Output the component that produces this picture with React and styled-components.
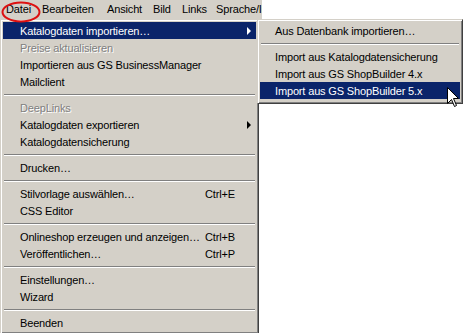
import React from 'react';
import styled, { createGlobalStyle } from 'styled-components';

const GlobalStyle = createGlobalStyle`
  html, body {
    margin: 0;
    padding: 0;
    background: #ffffff;
  }
  body {
    font-family: "Liberation Sans", Arial, sans-serif;
    font-size: 11px;
    letter-spacing: -0.15px;
  }
`;

const Screen = styled.div`
  position: relative;
  width: 464px;
  height: 333px;
  overflow: hidden;
  background: #ffffff;
`;

const MenuBar = styled.div`
  display: flex;
  align-items: center;
  width: 262px;
  height: 19px;
  background: #d4d0c8;
  box-sizing: border-box;
  overflow: hidden;
  white-space: nowrap;
`;

const BarItem = styled.span`
  flex: none;
  width: ${p => (p.$w ? `${p.$w}px` : 'auto')};
  padding-left: 6px;
  box-sizing: border-box;
  color: #000;
  line-height: 19px;
`;

// Windows 2000 style raised popup frame
const Popup = styled.div`
  background: #d4d0c8;
  border-top: 1px solid #d4d0c8;
  border-left: 1px solid #d4d0c8;
  border-right: 1px solid #404040;
  border-bottom: 1px solid #404040;
  box-shadow: inset 1px 1px 0 #ffffff, inset -1px -1px 0 #808080;
  padding: 2px;
  box-sizing: border-box;
  display: flex;
  flex-direction: column;
`;

const MainMenu = styled(Popup)`
  width: 259px;
  min-height: 314px;
`;

const SubMenu = styled(Popup)`
  position: absolute;
  top: -3px;
  left: 254px;
  width: 206px;
  padding-bottom: 4px;
  z-index: 2;
`;

const Item = styled.div`
  position: relative;
  display: flex;
  align-items: center;
  height: 17px;
  padding-left: ${p => p.$indent || 17}px;
  background: ${p => (p.$active ? '#0a246a' : 'transparent')};
  color: ${p => (p.$active ? '#ffffff' : p.$disabled ? '#808080' : '#000000')};
  text-shadow: ${p => (p.$disabled ? '1px 1px 0 #ffffff' : 'none')};
  white-space: nowrap;
`;

const Label = styled.span`
  flex: 1;
`;

const Right = styled.span`
  display: flex;
  align-items: center;
  width: 51px;
`;

const Arrow = styled.span`
  margin-left: auto;
  margin-right: 5px;
  width: 0;
  height: 0;
  border-top: 4px solid transparent;
  border-bottom: 4px solid transparent;
  border-left: 4px solid ${p => (p.$light ? '#ffffff' : '#000000')};
`;

const Separator = styled.div`
  height: 9px;
  display: flex;
  align-items: center;
  padding: 0 1px;
  &::before {
    content: '';
    flex: 1;
    height: 0;
    border-top: 1px solid #808080;
    border-bottom: 1px solid #ffffff;
  }
`;

const Overlay = styled.svg`
  position: absolute;
  left: ${p => p.$x}px;
  top: ${p => p.$y}px;
  pointer-events: none;
  z-index: 5;
`;

const barItems = [
  { label: 'Datei', w: 36 },
  { label: 'Bearbeiten', w: 65 },
  { label: 'Ansicht', w: 46 },
  { label: 'Bild', w: 29 },
  { label: 'Links', w: 34 },
  { label: 'Sprache/Info' },
];

const mainItems = [
  { label: 'Katalogdaten importieren…', active: true, arrow: true, sub: true },
  { label: 'Preise aktualisieren', disabled: true },
  { label: 'Importieren aus GS BusinessManager' },
  { label: 'Mailclient' },
  'sep',
  { label: 'DeepLinks', disabled: true },
  { label: 'Katalogdaten exportieren', arrow: true },
  { label: 'Katalogdatensicherung' },
  'sep',
  { label: 'Drucken…' },
  'sep',
  { label: 'Stilvorlage auswählen…', key: 'Ctrl+E' },
  { label: 'CSS Editor' },
  'sep',
  { label: 'Onlineshop erzeugen und anzeigen…', key: 'Ctrl+B' },
  { label: 'Veröffentlichen…', key: 'Ctrl+P' },
  'sep',
  { label: 'Einstellungen…' },
  { label: 'Wizard' },
  'sep',
  { label: 'Beenden' },
];

const subItems = [
  { label: 'Aus Datenbank importieren…' },
  'sep',
  { label: 'Import aus Katalogdatensicherung' },
  { label: 'Import aus GS ShopBuilder 4.x' },
  { label: 'Import aus GS ShopBuilder 5.x', active: true },
];

const SubMenuPopup = () => (
  <SubMenu>
    {subItems.map((it, i) =>
      it === 'sep' ? (
        <Separator key={i} />
      ) : (
        <Item key={i} $active={it.active} $indent={15}>
          <Label>{it.label}</Label>
        </Item>
      )
    )}
  </SubMenu>
);

export default function App() {
  return (
    <Screen>
      <GlobalStyle />
      <MenuBar>
        {barItems.map(b => (
          <BarItem key={b.label} $w={b.w}>{b.label}</BarItem>
        ))}
      </MenuBar>
      <MainMenu>
        {mainItems.map((it, i) =>
          it === 'sep' ? (
            <Separator key={i} />
          ) : (
            <Item key={i} $active={it.active} $disabled={it.disabled}>
              <Label>{it.label}</Label>
              <Right>
                {it.key}
                {it.arrow && <Arrow $light={it.active} />}
              </Right>
              {it.sub && <SubMenuPopup />}
            </Item>
          )
        )}
      </MainMenu>

      {/* red ellipse marking "Datei" */}
      <Overlay $x={0} $y={0} width="44" height="26" viewBox="0 0 44 26">
        <ellipse cx="21" cy="12" rx="18.5" ry="9.5" fill="none" stroke="#dd1111" strokeWidth="2" />
      </Overlay>

      {/* mouse pointer */}
      <Overlay $x={447} $y={87} width="14" height="22" viewBox="0 0 14 22">
        <path d="M0.5 0.5 L0.5 16.5 L4.5 12.5 L7.5 19.5 L9.5 18.5 L6.5 11.5 L11.5 11.5 Z" fill="#ffffff" stroke="#000000" strokeWidth="1" />
      </Overlay>
    </Screen>
  );
}
